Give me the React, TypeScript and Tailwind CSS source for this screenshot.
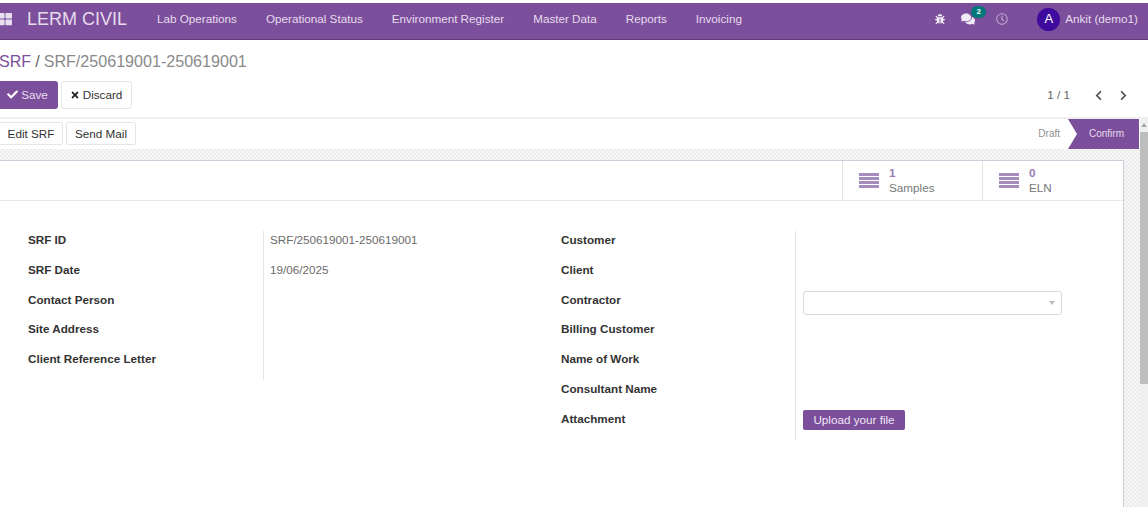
import React from 'react';
import { FaBug, FaCheck, FaChevronLeft, FaChevronRight, FaComments, FaRegClock, FaThLarge, FaTimes } from 'react-icons/fa';

const menus = ['Lab Operations', 'Operational Status', 'Environment Register', 'Master Data', 'Reports', 'Invoicing'];
const leftFields = [
  { label: 'SRF ID', value: 'SRF/250619001-250619001' },
  { label: 'SRF Date', value: '19/06/2025' },
  { label: 'Contact Person', value: '' },
  { label: 'Site Address', value: '' },
  { label: 'Client Reference Letter', value: '' },
];
const rightLabels = ['Customer', 'Client', 'Contractor', 'Billing Customer', 'Name of Work', 'Consultant Name', 'Attachment'];

const Bars = () => (
  <div className="flex w-[20px] flex-col gap-[1px]">
    <div className="h-[3px] bg-[#a68bbd]" />
    <div className="h-[3px] bg-[#a68bbd]" />
    <div className="h-[3px] bg-[#a68bbd]" />
    <div className="h-[3px] bg-[#a68bbd]" />
  </div>
);

const StatButton = ({ count, label, width }: { count: string; label: string; width: string }) => (
  <div className={`flex h-full items-center gap-[10px] border-l border-[#e4e4e4] pl-[16px] ${width}`}>
    <Bars />
    <div className="flex flex-col pb-[2px] leading-[15px]">
      <span className="text-[11.7px] font-bold text-[#9b7bb5]">{count}</span>
      <span className="text-[11.7px] text-[#777]">{label}</span>
    </div>
  </div>
);

export default function App() {
  return (
    <div className="flex h-[507px] w-[1148px] flex-col overflow-hidden bg-white pt-[3px] font-['Liberation_Sans',Arial,sans-serif] text-[11.7px] text-[#4c4c4c]">
      <nav className="flex h-[37px] shrink-0 items-center border-b border-[#5f3b78] bg-[#7c4f9c] pb-[4px] text-white">
        <FaThLarge size={14} className="-ml-[2px] text-[#e9e0ef]" />
        <span className="ml-[15px] text-[18px] text-[#e6dcec]">LERM CIVIL</span>
        <div className="ml-[30px] flex gap-[29px] text-[#e6dcec]">
          {menus.map((m) => (
            <span key={m}>{m}</span>
          ))}
        </div>
        <div className="ml-auto flex items-center pr-[10px]">
          <FaBug size={10} className="mr-[16px] text-[#f1ebf5]" />
          <div className="relative mr-[21px]">
            <FaComments size={14} className="text-[#f1ebf5]" />
            <span className="absolute -right-[11px] -top-[6px] flex h-[12px] w-[15px] items-center justify-center rounded-full bg-[#00787a] text-[8px] font-bold">2</span>
          </div>
          <FaRegClock size={12} className="mr-[29px] text-[#b9a3c9]" />
          <span className="flex h-[23px] w-[23px] items-center justify-center rounded-full bg-[#3f0a9e] text-[13px]">A</span>
          <span className="ml-[5px] text-[#e6dcec]">Ankit (demo1)</span>
        </div>
      </nav>

      <div className="h-[79px] shrink-0 border-b-2 border-[#eeeeee]">
        <div className="-ml-[1px] flex h-[41px] items-end pb-[10px] text-[16.1px] leading-[20px] text-[#8a8a8a]">
          <span className="text-[#7c4f9c]">SRF</span>
          <span className="mx-[4px] text-[#666]">/</span>
          <span>SRF/250619001-250619001</span>
        </div>
        <div className="flex h-[28px] items-center">
          <button className="-ml-[3px] flex h-[28px] w-[61px] items-center justify-center gap-[3px] rounded-[3px] bg-[#7c4f9c] pb-[1px] text-[#e6dcec]">
            <FaCheck size={11} className="text-white" />
            Save
          </button>
          <button className="ml-[3px] flex h-[28px] w-[71px] items-center justify-center gap-[3px] rounded-[3px] border border-[#e6e6e6] pb-[1px] pr-[1px] text-[#333]">
            <FaTimes size={10} className="text-[#222]" />
            Discard
          </button>
          <span className="ml-auto text-[#666]">1 / 1</span>
          <FaChevronLeft size={11} className="ml-[23px] text-[#555]" />
          <FaChevronRight size={11} className="ml-[14px] mr-[19px] text-[#555]" />
        </div>
      </div>

      <div className="flex min-h-0 flex-1">
        <div className="flex min-w-0 flex-1 flex-col">
          <div className="flex h-[30px] shrink-0 items-start pt-[3px]">
            <button className="-ml-[3px] h-[23px] w-[66px] rounded-[2px] border border-[#e6e6e6] pl-[2px] text-[#333]">Edit SRF</button>
            <button className="ml-[3px] h-[23px] w-[70px] rounded-[2px] border border-[#e6e6e6] text-[#333]">Send Mail</button>
            <span className="ml-auto mr-[8px] text-[10px] leading-[24px] text-[#8f8f8f]">Draft</span>
            <span className="-mt-[3px] mr-[1px] flex h-[30px] w-[71px] items-center justify-center bg-[#7c4f9c] pb-[2px] pl-[6px] text-[10px] text-[#e6dcec] [clip-path:polygon(0_0,100%_0,100%_100%,0_100%,9px_50%)]">Confirm</span>
          </div>
          <div className="min-h-0 flex-1 bg-[#f2f2f2] bg-[repeating-conic-gradient(#ececec_0%_25%,#f7f7f7_0%_50%)] bg-[length:4px_4px] pr-[16px] pt-[11px]">
            <div className="-ml-[2px] h-full border border-b-0 border-[#d0cedb] bg-white">
              <div className="flex h-[40px] justify-end border-b border-[#e8e8e8]">
                <StatButton count="1" label="Samples" width="w-[140px]" />
                <StatButton count="0" label="ELN" width="w-[141px]" />
              </div>
              <div className="flex pl-[29px] pt-[30px]">
                <div className="w-[533px]">
                  <div className="flex">
                    <div className="w-[235px]">
                      {leftFields.map((f) => (
                        <div key={f.label} className="h-[29.8px] pt-[2px] font-bold leading-[14px] text-[#333]">{f.label}</div>
                      ))}
                    </div>
                    <div className="border-l border-[#e4e4e4] pl-[6px] text-[#6b6b6b]">
                      {leftFields.map((f) => (
                        <div key={f.label} className="h-[29.8px] pt-[2px] leading-[14px]">{f.value}</div>
                      ))}
                    </div>
                  </div>
                </div>
                <div className="flex">
                  <div className="w-[234px]">
                    {rightLabels.map((l) => (
                      <div key={l} className="h-[29.8px] pt-[2px] font-bold leading-[14px] text-[#333]">{l}</div>
                    ))}
                  </div>
                  <div className="border-l border-[#e4e4e4] pl-[7px]">
                    <div className="h-[60px]" />
                    <div className="flex h-[30px] items-start">
                      <div className="flex h-[24px] w-[259px] items-center justify-end rounded-[3px] border border-[#d9d9d9] pr-[6px]">
                        <span className="h-0 w-0 border-x-[3.5px] border-t-[4px] border-x-transparent border-t-[#bdbdbd]" />
                      </div>
                    </div>
                    <div className="h-[89px]" />
                    <div className="flex h-[30px] items-start">
                      <button className="h-[20px] w-[102px] rounded-[2px] bg-[#7c4f9c] text-[#eee6f3]">Upload your file</button>
                    </div>
                  </div>
                </div>
              </div>
            </div>
          </div>
        </div>
        <div className="flex w-[8px] shrink-0 flex-col bg-[#f0f0f0]">
          <div className="flex h-[13px] justify-center pt-[4px]">
            <span className="h-0 w-0 border-x-[3px] border-b-[4px] border-x-transparent border-b-[#a8a8a8]" />
          </div>
          <div className="h-[252px] bg-[#bdbdbd]" />
        </div>
      </div>
    </div>
  );
}
